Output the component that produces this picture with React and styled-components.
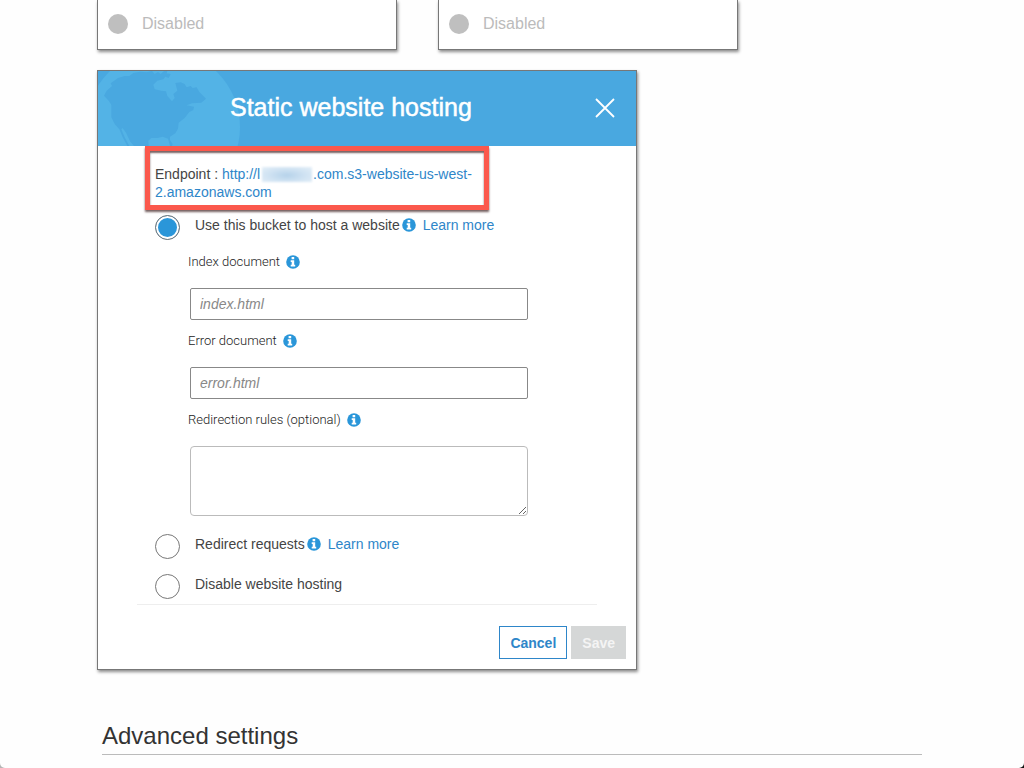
import React from "react";
import styled, { createGlobalStyle } from "styled-components";

const GlobalStyle = createGlobalStyle`
  * {
    box-sizing: border-box;
  }
  html {
    background: linear-gradient(to right, #b5b5b5 50%, #111 50%);
  }
  body {
    margin: 0;
    font-family: "Liberation Sans", Arial, sans-serif;
    font-size: 14px;
    line-height: 18px;
    color: #444;
  }
`;

const Page = styled.main`
  min-height: 100vh;
  padding: 0 102px 0 97px;
  background: #fefefe;
  border-radius: 0 0 5px 5px;
  overflow: hidden;
`;

const Cards = styled.div`
  display: flex;
  gap: 41px;
`;

const StatusCard = styled.section`
  flex: 0 1 300px;
  display: flex;
  align-items: center;
  gap: 14px;
  padding: 13px 10px 14px;
  border: 1px solid #777;
  border-top: 0;
  background: #fff;
  box-shadow: 1px 2px 3px rgba(0, 0, 0, 0.45);
  font-size: 16px;
  line-height: 22px;
  color: #bbb;
`;

const Dot = styled.span`
  width: 20px;
  height: 20px;
  border-radius: 50%;
  background: #bfbfbf;
`;

const Panel = styled.section`
  max-width: 540px;
  margin-top: 20px;
  border: 1px solid #777;
  background: #fff;
  box-shadow: 1px 2px 3px rgba(0, 0, 0, 0.45);
`;

const PanelHeader = styled.header`
  display: grid;
  grid-template-columns: 132px 1fr 62px;
  align-items: center;
  height: 75px;
  background: #49a8e0;
  color: #fff;

  h2 {
    margin: 0;
    padding-bottom: 3px;
    font-size: 25px;
    line-height: 30px;
    font-weight: 400;
    -webkit-text-stroke: 0.5px #fff;
    white-space: nowrap;
  }
`;

const Globe = styled.svg`
  width: 152px;
  height: 75px;
`;

const CloseButton = styled.button`
  display: flex;
  justify-content: center;
  padding: 0 0 2px;
  border: 0;
  background: none;
  color: #fff;
  cursor: pointer;
`;

const PanelBody = styled.form`
  padding: 0 39px 0 47px;
`;

const Endpoint = styled.p`
  max-width: 344px;
  margin: 0;
  padding: 14px 5px 4px;
  border: 5px solid #fb584c;
  box-shadow: 0 2px 2px rgba(60, 30, 30, 0.7), inset 0 2px 2px rgba(60, 30, 30, 0.7);
  position: relative;
`;

const Link = styled.a`
  color: #2e86c9;
  text-decoration: none;
`;

const Redacted = styled.span`
  display: inline-block;
  width: 50px;
  height: 15px;
  margin: 0 1px 0 2px;
  vertical-align: -3px;
  background: radial-gradient(ellipse at 50% 55%, #b5d2ea 0, #cfe2f2 50%, #e4eff8 100%);
  filter: blur(1px);
`;

const Option = styled.div`
  display: flex;
  align-items: center;
  height: 25px;
  margin: ${({ $top }) => $top}px 0 0 10px;

  label {
    margin: 0 2px 5px 15px;
  }
  a {
    margin: 0 0 5px 7px;
  }
  svg {
    margin-bottom: 5px;
  }
`;

const Radio = styled.input`
  appearance: none;
  flex: none;
  width: 25px;
  height: 25px;
  margin: 0;
  border: 1px solid #777;
  border-radius: 50%;
  background: #fff;

  &:checked {
    background: #2a96d9;
    box-shadow: inset 0 0 0 2px #fff;
  }
`;

const Fields = styled.div`
  display: grid;
  gap: 12px;
  max-width: 383px;
  margin-top: 13px;
  padding-left: 43px;
`;

const Field = styled.div`
  display: grid;
  gap: 17px;
`;

const FieldLabel = styled.div`
  display: flex;
  align-items: center;
  gap: 6px;
  font-family: Roboto, "Liberation Sans", sans-serif;
  font-size: 13px;
  font-weight: 300;
  color: #222;
`;

const TextInput = styled.input`
  width: calc(100% - 2px);
  height: 32px;
  margin-left: 2px;
  padding: 0 9px;
  border: 1px solid #888;
  border-radius: 2px;
  background: #fff;
  font: italic 14px "Liberation Sans", Arial, sans-serif;

  &::placeholder {
    color: #888;
  }
`;

const TextArea = styled.textarea`
  width: calc(100% - 2px);
  height: 70px;
  margin-left: 2px;
  border: 1px solid #bbb;
  border-radius: 4px;
  background: #fff;
  resize: both;
`;

const Divider = styled.hr`
  height: 1px;
  margin: 5px 0 0 -8px;
  border: 0;
  background: #eee;
`;

const PanelFooter = styled.footer`
  display: flex;
  justify-content: flex-end;
  gap: 4px;
  padding: 21px 10px 10px;
`;

const Button = styled.button`
  height: 33px;
  padding: 0 10px;
  border: 1px solid ${({ $primary }) => ($primary ? "#d5d7d7" : "#2e86c9")};
  background: ${({ $primary }) => ($primary ? "#d5d7d7" : "#fff")};
  color: ${({ $primary }) => ($primary ? "#f4f4f4" : "#2e86c9")};
  font: 700 14px "Liberation Sans", Arial, sans-serif;
`;

const SectionTitle = styled.h2`
  margin: 51px 0 0 5px;
  padding-bottom: 3px;
  border-bottom: 1px solid #bbb;
  font-size: 24px;
  line-height: 30px;
  font-weight: 400;
  color: #333;
`;

const InfoIcon = () => (
  <svg width="14" height="14" viewBox="0 0 14 14" aria-hidden="true">
    <circle cx="7" cy="7" r="6.8" fill="#2a96d9" />
    <path d="M5.6 2h2.6v2.2H5.6zM4.7 5.2h3.5v4.5h1v1.8H4.7V9.7h1V7h-1z" fill="#fff" />
  </svg>
);

const GlobeArt = () => (
  <Globe viewBox="24 33 456 225" aria-hidden="true">
    <circle cx="219" cy="201" r="231" fill="#53b3e6" />
    <path
      fill="#49a8e0"
      d="M42 107L50 92 66 78 62 70 84 54 104 48 118 48 130 39 150 35 170 37 186 33 194 42 204 36 212 42 222 33H232L230 40 242 42 236 54 226 50 220 58 202 62 190 74 194 88 214 92 228 94 232 108 246 124 254 114 250 102 262 92 256 69 272 67 284 72 290 82 302 78 308 84 320 82 328 96 348 116 334 128 306 130 290 136 312 140 310 150 298 156 284 174 266 188 264 206 256 220 240 230 240 240 248 252 246 258H240L234 236 218 230 202 234 184 234 175 242 176 258H132L120 244 108 218 98 204 94 208 104 232 118 258H112L98 232 88 208 74 192 64 172 64 134 56 122Z"
    />
  </Globe>
);

const CloseIcon = () => (
  <svg width="20" height="20" viewBox="0 0 20 20" aria-hidden="true">
    <path d="M1 1L19 19M19 1L1 19" stroke="currentColor" strokeWidth="1.8" fill="none" />
  </svg>
);

const fields = [
  { id: "index", label: "Index document", placeholder: "index.html" },
  { id: "error", label: "Error document", placeholder: "error.html" },
  { id: "rules", label: "Redirection rules (optional)", multiline: true },
];

const HostingOption = ({ id, label, top, learnMore, ...rest }) => (
  <Option $top={top}>
    <Radio type="radio" name="hosting" id={id} {...rest} />
    <label htmlFor={id}>{label}</label>
    {learnMore && (
      <>
        <InfoIcon />
        <Link href="#">Learn more</Link>
      </>
    )}
  </Option>
);

const App = () => {
  return (
    <>
      <GlobalStyle />
      <Page>
        <Cards>
          {[1, 2].map((card) => (
            <StatusCard key={card}>
              <Dot />
              <span>Disabled</span>
            </StatusCard>
          ))}
        </Cards>
        <Panel>
          <PanelHeader>
            <GlobeArt />
            <h2>Static website hosting</h2>
            <CloseButton type="button" aria-label="Close">
              <CloseIcon />
            </CloseButton>
          </PanelHeader>
          <PanelBody>
            <Endpoint>
              Endpoint :{" "}
              <Link href="#">
                <span>http://l</span>
                <Redacted />
                <span>.com.s3-website-us-west-</span>
                <wbr />
                <span>2.amazonaws.com</span>
              </Link>
            </Endpoint>
            <HostingOption id="host" label="Use this bucket to host a website" top={5} learnMore defaultChecked />
            <Fields>
              {fields.map(({ id, label, placeholder, multiline }) => (
                <Field key={id}>
                  <FieldLabel>
                    <label htmlFor={id}>{label}</label>
                    <InfoIcon />
                  </FieldLabel>
                  {multiline ? <TextArea id={id} /> : <TextInput id={id} placeholder={placeholder} />}
                </Field>
              ))}
            </Fields>
            <HostingOption id="redirect" label="Redirect requests" top={18} learnMore />
            <HostingOption id="disable" label="Disable website hosting" top={15} />
            <Divider />
          </PanelBody>
          <PanelFooter>
            <Button type="button">Cancel</Button>
            <Button type="button" $primary disabled>
              Save
            </Button>
          </PanelFooter>
        </Panel>
        <SectionTitle>Advanced settings</SectionTitle>
      </Page>
    </>
  );
};

export default App;
